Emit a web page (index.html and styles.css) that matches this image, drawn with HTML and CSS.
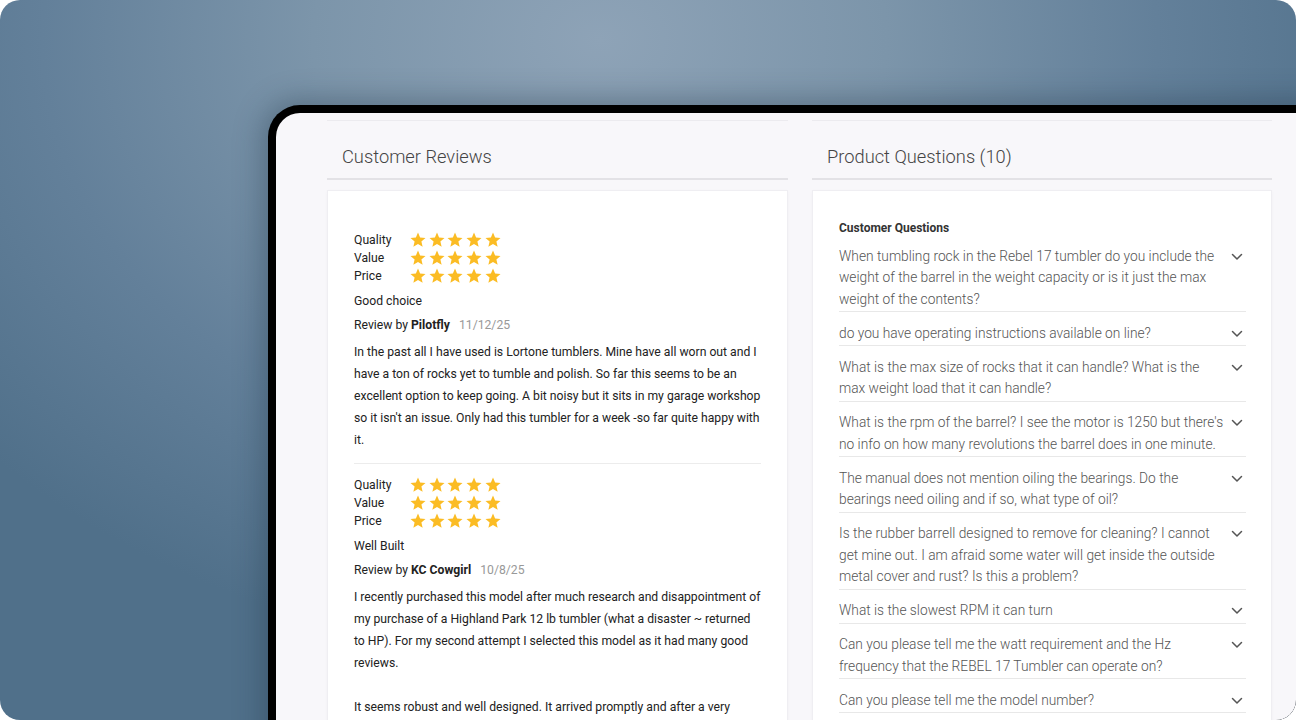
FILE: index.html
```html
<!DOCTYPE html>
<html lang="en">

<head>
	<meta charset="UTF-8" />
	<meta name="viewport" content="width=device-width, initial-scale=1.0" />
	<title>Reviews and Questions</title>
	<link rel="stylesheet" href="styles.css">
</head>

<body>

	<svg class="defs" width="0" height="0" aria-hidden="true">
		<symbol id="star" viewBox="0 0 24 24">
			<path d="M12 17.27L18.18 21l-1.64-7.03L22 9.24l-7.19-.61L12 2 9.19 8.63 2 9.24l5.46 4.73L5.82 21z" />
		</symbol>
		<symbol id="chevron" viewBox="0 0 12 8">
			<path d="M1.5 1.5l4.5 4.5 4.5-4.5" fill="none" stroke="currentColor" stroke-width="1.5" stroke-linecap="round" stroke-linejoin="round" />
		</symbol>
	</svg>

	<div class="stage">
		<div class="device">
			<div class="screen">
				<div class="columns">

					<section class="panel">
						<div class="panel-top"></div>
						<h2 class="panel-title">Customer Reviews</h2>
						<div class="card reviews">

							<div class="review">
								<div class="ratings">
									<div class="rating-row"><span class="rating-label">Quality</span><span class="stars"><svg><use href="#star" /></svg><svg><use href="#star" /></svg><svg><use href="#star" /></svg><svg><use href="#star" /></svg><svg><use href="#star" /></svg></span></div>
									<div class="rating-row"><span class="rating-label">Value</span><span class="stars"><svg><use href="#star" /></svg><svg><use href="#star" /></svg><svg><use href="#star" /></svg><svg><use href="#star" /></svg><svg><use href="#star" /></svg></span></div>
									<div class="rating-row"><span class="rating-label">Price</span><span class="stars"><svg><use href="#star" /></svg><svg><use href="#star" /></svg><svg><use href="#star" /></svg><svg><use href="#star" /></svg><svg><use href="#star" /></svg></span></div>
								</div>
								<div class="review-title">Good choice</div>
								<div class="review-meta">Review by <strong>Pilotfly</strong> <span class="review-date">11/12/25</span></div>
								<p class="review-body">In the past all I have used is Lortone tumblers. Mine have all worn out and I have a ton of rocks yet to tumble and polish. So far this seems to be an excellent option to keep going. A bit noisy but it sits in my garage workshop so it isn't an issue. Only had this tumbler for a week -so far quite happy with it.</p>
							</div>

							<div class="review">
								<div class="ratings">
									<div class="rating-row"><span class="rating-label">Quality</span><span class="stars"><svg><use href="#star" /></svg><svg><use href="#star" /></svg><svg><use href="#star" /></svg><svg><use href="#star" /></svg><svg><use href="#star" /></svg></span></div>
									<div class="rating-row"><span class="rating-label">Value</span><span class="stars"><svg><use href="#star" /></svg><svg><use href="#star" /></svg><svg><use href="#star" /></svg><svg><use href="#star" /></svg><svg><use href="#star" /></svg></span></div>
									<div class="rating-row"><span class="rating-label">Price</span><span class="stars"><svg><use href="#star" /></svg><svg><use href="#star" /></svg><svg><use href="#star" /></svg><svg><use href="#star" /></svg><svg><use href="#star" /></svg></span></div>
								</div>
								<div class="review-title">Well Built</div>
								<div class="review-meta">Review by <strong>KC Cowgirl</strong> <span class="review-date">10/8/25</span></div>
								<p class="review-body">I recently purchased this model after much research and disappointment of my purchase of a Highland Park 12 lb tumbler (what a disaster ~ returned to HP). For my second attempt I selected this model as it had many good reviews.<br><br>It seems robust and well designed. It arrived promptly and after a very straightforward setup it was running the same afternoon.</p>
							</div>

						</div>
					</section>

					<section class="panel">
						<div class="panel-top"></div>
						<h2 class="panel-title">Product Questions (10)</h2>
						<div class="card questions">
							<h3 class="questions-head">Customer Questions</h3>
							<ul class="question-list">
								<li class="question"><span>When tumbling rock in the Rebel 17 tumbler do you include the weight of the barrel in the weight capacity or is it just the max weight of the contents?</span><svg class="chevron"><use href="#chevron" /></svg></li>
								<li class="question"><span>do you have operating instructions available on line?</span><svg class="chevron"><use href="#chevron" /></svg></li>
								<li class="question"><span>What is the max size of rocks that it can handle? What is the max weight load that it can handle?</span><svg class="chevron"><use href="#chevron" /></svg></li>
								<li class="question"><span>What is the rpm of the barrel? I see the motor is 1250 but there's no info on how many revolutions the barrel does in one minute.</span><svg class="chevron"><use href="#chevron" /></svg></li>
								<li class="question"><span>The manual does not mention oiling the bearings. Do the bearings need oiling and if so, what type of oil?</span><svg class="chevron"><use href="#chevron" /></svg></li>
								<li class="question"><span>Is the rubber barrell designed to remove for cleaning? I cannot get mine out. I am afraid some water will get inside the outside metal cover and rust? Is this a problem?</span><svg class="chevron"><use href="#chevron" /></svg></li>
								<li class="question"><span>What is the slowest RPM it can turn</span><svg class="chevron"><use href="#chevron" /></svg></li>
								<li class="question"><span>Can you please tell me the watt requirement and the Hz frequency that the REBEL 17 Tumbler can operate on?</span><svg class="chevron"><use href="#chevron" /></svg></li>
								<li class="question"><span>Can you please tell me the model number?</span><svg class="chevron"><use href="#chevron" /></svg></li>
								<li class="question"><span>How much grit should I use for a full barrel?</span><svg class="chevron"><use href="#chevron" /></svg></li>
							</ul>
						</div>
					</section>

				</div>
			</div>
		</div>
	</div>

</body>

</html>
```

FILE: styles.css
```css
* {
	box-sizing: border-box;
	margin: 0;
	padding: 0;
}

html,
body {
	width: 1296px;
	height: 720px;
	overflow: hidden;
	background: #ffffff;
}

body {
	font-family: Roboto, 'Liberation Sans', sans-serif;
	color: #222;
}

.defs {
	position: absolute;
	width: 0;
	height: 0;
}

/* backdrop with rounded corners */
.stage {
	width: 1296px;
	height: 720px;
	border-radius: 20px;
	overflow: hidden;
	padding: 105px 0 0 268px;
	background:
		radial-gradient(ellipse 820px 620px at 600px 40px, #8ea3b7 0%, #7c95aa 35%, #63809a 68%, #50708a 100%);
}

/* black tablet bezel, running off the right and bottom edges */
.device {
	width: 1080px;
	height: 700px;
	background: #000;
	border-radius: 32px 32px 0 0;
	padding: 8px 0 0 8px;
	box-shadow: 0 0 28px 6px rgba(30, 48, 66, 0.35);
}

.screen {
	height: 100%;
	background: #f8f7fa;
	border-radius: 24px 0 0 0;
	padding-left: 51px;
	overflow: hidden;
}

.columns {
	display: grid;
	grid-template-columns: 461px 460px;
	gap: 24px;
}

.panel-top {
	height: 8px;
	border-bottom: 1px solid #ecebef;
}

.panel-title {
	font-size: 18.3px;
	font-weight: 300;
	color: #444;
	line-height: 24px;
	padding: 24px 15px 9px;
	border-bottom: 2px solid #e3e2e6;
	margin-bottom: 10px;
}

.card {
	background: #fff;
	border: 1px solid #efeef2;
	box-shadow: 0 1px 3px rgba(0, 0, 0, 0.03);
}

/* reviews */
.reviews {
	padding: 40px 26px 0 26px;
	height: 560px;
}

.review {
	padding-bottom: 12px;
	border-bottom: 1px solid #ececec;
}

.review + .review {
	padding-top: 12px;
	border-bottom: none;
}

.rating-row {
	display: flex;
	align-items: center;
	height: 18px;
	font-size: 12.2px;
}

.rating-label {
	width: 55px;
}

.stars {
	display: flex;
	gap: 0.7px;
	color: #fbbc24;
}

.stars svg {
	width: 18px;
	height: 18px;
	fill: currentColor;
}

.review-title {
	font-size: 12.2px;
	line-height: 18px;
	margin-top: 7px;
}

.review-meta {
	font-size: 12.2px;
	line-height: 18px;
	margin-top: 6px;
}

.review-meta strong {
	font-weight: 700;
	margin-right: 6px;
}

.review-date {
	color: #999;
}

.review-body {
	font-size: 12.2px;
	line-height: 22px;
	margin-top: 7px;
}

/* questions */
.questions {
	padding: 30px 25px 30px 26px;
}

.questions-head {
	font-size: 12px;
	font-weight: 700;
	line-height: 14px;
	color: #333;
}

.question-list {
	list-style: none;
}

.question {
	display: flex;
	justify-content: space-between;
	gap: 4px;
	padding: 10.5px 0 1px;
	border-bottom: 1px solid #e8e8e8;
	font-size: 13.75px;
	font-weight: 300;
	line-height: 21.5px;
	color: #555;
}

.question span {
	width: 386px;
}

.chevron {
	width: 12px;
	height: 8px;
	margin: 7px 3px 0 0;
	color: #555;
	flex-shrink: 0;
}
```
